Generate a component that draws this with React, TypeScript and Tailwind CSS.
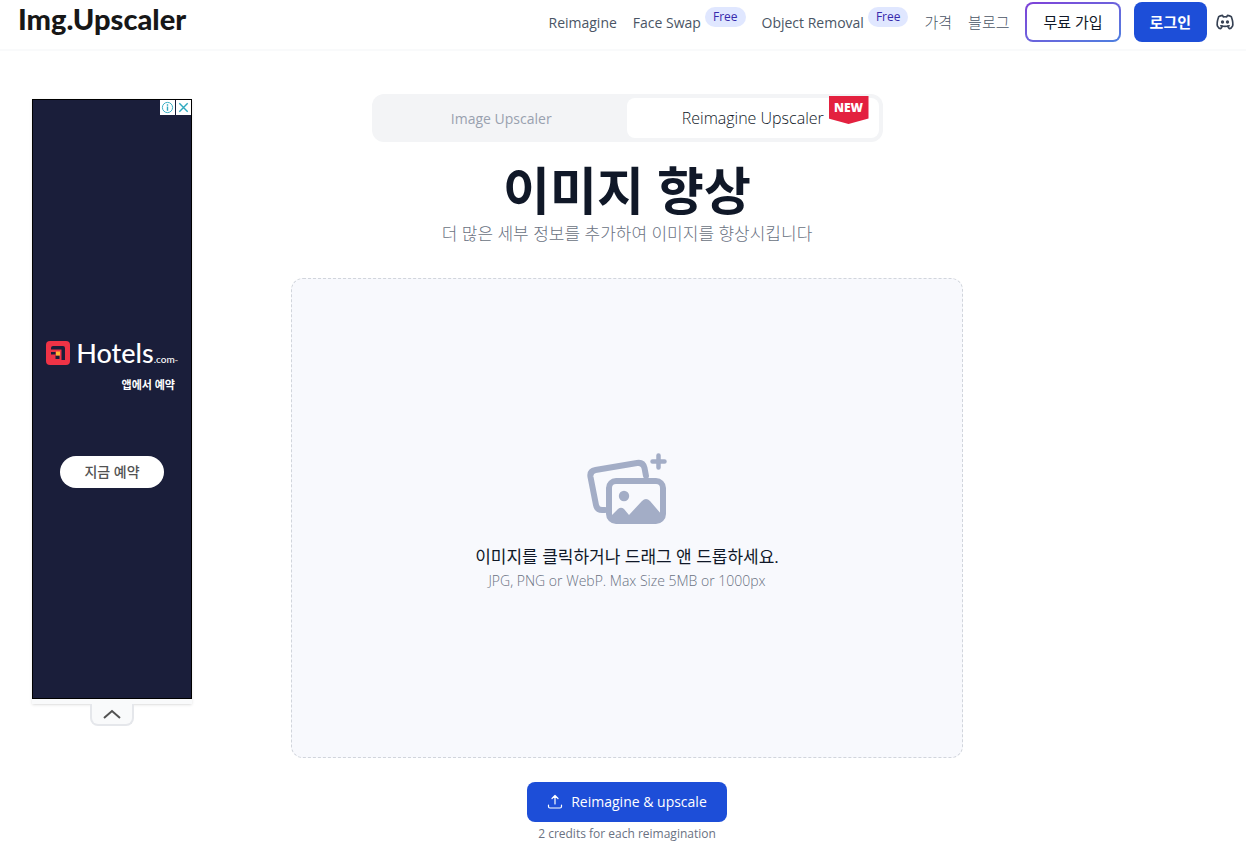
import { TbBrandDiscord } from "react-icons/tb";

type NavItem = { label: string; free?: boolean };

const navItems: NavItem[] = [
  { label: "Reimagine" },
  { label: "Face Swap", free: true },
  { label: "Object Removal", free: true },
];

const koreanNavItems: NavItem[] = [{ label: "가격" }, { label: "블로그" }];

function ImagesIcon() {
  return (
    <svg viewBox="0 0 80 72" className="h-[72px] w-20" fill="none" aria-hidden="true">
      <path
        d="M18 57h-3q-5 0-6-5L3.500 24q-1-6 5-7L50 10q6-1 7.500 5l1.500 8"
        stroke="#a3adc6"
        strokeWidth="6"
        strokeLinecap="round"
        strokeLinejoin="round"
      />
      <rect x="22" y="28" width="54" height="40" rx="7" stroke="#a3adc6" strokeWidth="6" />
      <circle cx="37" cy="43" r="5.200" fill="#a3adc6" />
      <path
        d="M24 63l7-7q3-2.500 6 0l5 6 13-14q4-4 8 0l12 14v7H24z"
        fill="#a3adc6"
      />
      <path d="M71.500 2.500v12M65.500 8.500h12" stroke="#a3adc6" strokeWidth="4.500" strokeLinecap="round" />
    </svg>
  );
}

function UploadIcon() {
  return (
    <svg
      viewBox="0 0 16 16"
      className="h-4 w-4"
      fill="none"
      stroke="currentColor"
      strokeWidth="1.200"
      strokeLinecap="round"
      strokeLinejoin="round"
      aria-hidden="true"
    >
      <path d="M8 10V1.500M5 4.500l3-3 3 3M1.500 11v1.500q0 1.500 1.500 1.500h10q1.500 0 1.500-1.500V11" />
    </svg>
  );
}

function NavLink({ item }: { item: NavItem }) {
  return (
    <a href="#" className="flex whitespace-nowrap">
      {item.label}
      {item.free && (
        <span className="-mt-[6px] mb-[6px] ml-1 flex h-5 items-center rounded-full bg-indigo-100 px-2 text-xs text-indigo-800">
          Free
        </span>
      )}
    </a>
  );
}

function Header() {
  return (
    <header className="flex h-[51px] items-start justify-between border-b-2 border-gray-50 pr-[11px] pl-[18px]">
      <a href="#" className="font-['Lato'] text-[29px] leading-[38px] font-black text-neutral-900">
        Img.Upscaler
      </a>
      <div className="flex items-center pt-[2px]">
        <nav className="mr-4 flex items-center gap-4 text-gray-600">
          <div className="flex gap-4 pt-[2px] text-sm">
            {navItems.map((item) => (
              <NavLink key={item.label} item={item} />
            ))}
          </div>
          <div className="flex gap-4 text-[15px] font-light">
            {koreanNavItems.map((item) => (
              <NavLink key={item.label} item={item} />
            ))}
          </div>
        </nav>
        <button className="mr-[13px] h-10 rounded-lg bg-linear-to-br from-[#7e3fd8] to-[#4b7fe0] p-[2px] text-[15px] text-gray-900">
          <span className="flex h-full items-center rounded-md bg-white px-4">무료 가입</span>
        </button>
        <button className="mr-2 h-10 rounded-lg bg-[#1d4ed8] px-4 text-[15px] font-bold text-white">
          로그인
        </button>
        <a href="#" aria-label="Discord" className="text-gray-700">
          <TbBrandDiscord size={20} />
        </a>
      </div>
    </header>
  );
}

function HotelsLogo() {
  return (
    <div className="flex h-6 items-center gap-[6px] text-white">
      <svg viewBox="0 0 24 24" className="h-6 w-6" aria-hidden="true">
        <rect width="24" height="24" rx="4" fill="#ef3346" />
        <path d="M5 7q0-2 2-2h10q2 0 2 2v12h-3.500V8.500H5z" fill="#1a1e3a" />
        <path d="M5 11h4.500v2.500H5zM9.500 14.500h4V18h-4z" fill="#1a1e3a" />
        <path d="M10 10.500h4v4h-4z" fill="#ffb733" />
      </svg>
      <span className="flex items-baseline font-['Lato'] text-[27px] leading-6 font-medium">
        Hotels<span className="text-[10px] leading-none">.com</span>
        <span className="text-[4px] leading-none">™</span>
      </span>
    </div>
  );
}

function SideAd() {
  return (
    <aside className="w-40">
      <div className="border-b-[5px] border-gray-50 shadow">
        <div className="relative flex h-[600px] flex-col items-center border border-black bg-[#1a1e3a] pt-[241px]">
          <div className="absolute top-0 right-0 flex gap-px text-[#2fa9bf]">
            <button aria-label="Ad info" className="bg-white p-px">
              <svg viewBox="0 0 14 14" className="h-[13px] w-[13px]" fill="none" stroke="currentColor">
                <circle cx="7" cy="7" r="5.500" />
                <path d="M7 6v4.500M7 3.500v1.500" strokeWidth="1.500" />
              </svg>
            </button>
            <button aria-label="Close ad" className="bg-white p-px">
              <svg viewBox="0 0 14 14" className="h-[13px] w-[13px]" stroke="currentColor" strokeWidth="1.500">
                <path d="M2.500 2.500l9 9M11.500 2.500l-9 9" />
              </svg>
            </button>
          </div>
          <HotelsLogo />
          <p className="mt-3 self-end pr-4 text-[11px] leading-4 font-bold text-white">앱에서 예약</p>
          <button className="mt-[63px] h-8 rounded-full bg-white px-6 text-sm font-medium text-neutral-600">
            지금 예약
          </button>
        </div>
      </div>
      <button
        aria-label="Collapse ad"
        className="mx-auto flex h-[22px] w-11 items-center justify-center rounded-b-lg border-2 border-t-0 border-gray-200 bg-gray-50 text-neutral-600"
      >
        <svg viewBox="0 0 18 10" className="h-[10px] w-[18px]" fill="none" stroke="currentColor" strokeWidth="2">
          <path d="M1 9l8-7 8 7" />
        </svg>
      </button>
    </aside>
  );
}

function Tabs() {
  return (
    <div className="grid w-full max-w-[511px] grid-cols-2 rounded-xl bg-gray-100 p-1">
      <button className="h-10 rounded-lg pt-px text-sm text-gray-400">Image Upscaler</button>
      <button className="relative h-10 rounded-lg bg-white text-base font-light text-gray-900">
        Reimagine Upscaler
        <span className="absolute -top-[2px] right-[10px] h-7 w-10 bg-[#e3213f] text-center text-xs leading-6 font-extrabold text-white [clip-path:polygon(0_0,100%_0,100%_80%,50%_100%,0_80%)]">
          NEW
        </span>
      </button>
    </div>
  );
}

export default function App() {
  return (
    <div className="bg-white font-['Open_Sans','Noto_Sans_CJK_KR',sans-serif]">
      <Header />
      <div className="grid grid-cols-[1fr_minmax(0,672px)_1fr] pl-2">
        <div className="pt-12 pl-6">
          <SideAd />
        </div>
        <main className="flex flex-col items-center pt-[43px]">
          <Tabs />
          <h1 className="mt-6 text-[51px] leading-12 font-bold text-gray-900">이미지 향상</h1>
          <p className="mt-2 text-[17px] leading-6 font-light text-gray-500">
            더 많은 세부 정보를 추가하여 이미지를 향상시킵니다
          </p>
          <label className="mt-8 flex h-[480px] w-full cursor-pointer flex-col items-center rounded-xl border border-dashed border-gray-300 bg-[#f8f9fd] pt-[174px]">
            <ImagesIcon />
            <span className="mt-5 text-[17px] leading-6 text-gray-900">
              이미지를 클릭하거나 드래그 앤 드롭하세요.
            </span>
            <span className="text-sm leading-6 font-light text-gray-500">
              JPG, PNG or WebP. Max Size 5MB or 1000px
            </span>
            <input type="file" accept="image/*" className="sr-only" />
          </label>
          <button className="mt-6 flex h-10 items-center gap-2 rounded-lg bg-[#1d4ed8] px-5 text-sm font-medium text-white">
            <UploadIcon />
            Reimagine &amp; upscale
          </button>
          <p className="mt-1 text-xs text-gray-500">2 credits for each reimagination</p>
        </main>
      </div>
    </div>
  );
}
